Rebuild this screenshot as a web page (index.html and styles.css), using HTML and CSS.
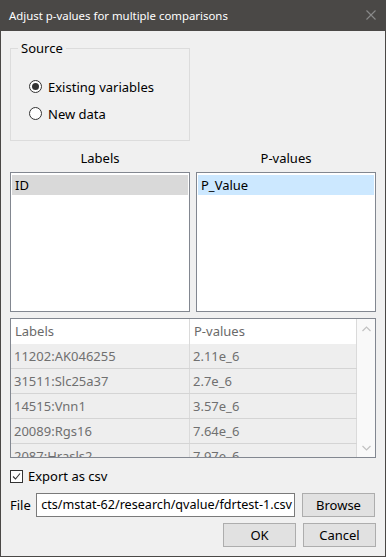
FILE: index.html
```html
<!DOCTYPE html>
<html>
<head>
<meta charset="utf-8">
<link rel="stylesheet" href="styles.css">
</head>
<body>
<div class="window">
  <div class="titlebar">
    <span class="title">Adjust p-values for multiple comparisons</span>
    <svg class="close" width="10" height="10" viewBox="0 0 10 10"><path d="M0.5 0.5 L9.5 9.5 M9.5 0.5 L0.5 9.5" stroke="#8a8a8a" stroke-width="1.1" fill="none"/></svg>
  </div>
  <div class="content">
    <div class="group">
      <span class="legend">Source</span>
      <div class="radio"><span class="rb checked"></span><span>Existing variables</span></div>
      <div class="radio"><span class="rb"></span><span>New data</span></div>
    </div>
    <div class="lists">
      <div class="listcol">
        <div class="listhead">Labels</div>
        <div class="listbox"><div class="item sel-gray">ID</div></div>
      </div>
      <div class="listcol">
        <div class="listhead">P-values</div>
        <div class="listbox"><div class="item sel-blue">P_Value</div></div>
      </div>
    </div>
    <div class="table">
      <div class="tbody">
        <div class="trow thead"><div class="c1">Labels</div><div class="c2">P-values</div></div>
        <div class="trow"><div class="c1">11202:AK046255</div><div class="c2">2.11e_6</div></div>
        <div class="trow"><div class="c1">31511:Slc25a37</div><div class="c2">2.7e_6</div></div>
        <div class="trow"><div class="c1">14515:Vnn1</div><div class="c2">3.57e_6</div></div>
        <div class="trow"><div class="c1">20089:Rgs16</div><div class="c2">7.64e_6</div></div>
        <div class="trow"><div class="c1">2087:Hrasls2</div><div class="c2">7.97e_6</div></div>
      </div>
      <div class="scrollbar">
        <svg width="9" height="6" viewBox="0 0 9 6"><path d="M0.5 5 L4.5 1 L8.5 5" stroke="#c2c2c2" stroke-width="1.2" fill="none"/></svg>
        <svg width="9" height="6" viewBox="0 0 9 6"><path d="M0.5 1 L4.5 5 L8.5 1" stroke="#c2c2c2" stroke-width="1.2" fill="none"/></svg>
      </div>
    </div>
    <div class="check">
      <span class="cb"><svg width="11" height="11" viewBox="0 0 11 11"><path d="M2 5.5 L4.5 8 L9 2.5" stroke="#333" stroke-width="1.1" fill="none"/></svg></span>
      <span>Export as csv</span>
    </div>
    <div class="filerow">
      <span class="filelabel">File</span>
      <div class="input"><span>cts/mstat-62/research/qvalue/fdrtest-1.csv</span></div>
      <div class="btn">Browse</div>
    </div>
    <div class="btnrow">
      <div class="btn">OK</div>
      <div class="btn">Cancel</div>
    </div>
  </div>
</div>
</body>
</html>
```
FILE: styles.css
```css
* { box-sizing: border-box; }
html, body { margin: 0; padding: 0; background: #f0f0f0; }
body { font-family: "Noto Sans", "Open Sans", sans-serif; font-size: 13px; color: #000; }
.window {
  width: 386px; height: 557px;
  border: 1px solid #4a4846; border-top: 0;
  background: #f0f0f0;
  display: flex; flex-direction: column;
}
.titlebar {
  height: 31px; background: #4a4846; margin: 0 -1px;
  display: flex; align-items: center; justify-content: space-between;
  padding: 0 10px 0 9px; flex: none;
}
.title { color: #fff; font-size: 11.4px; }
.close { margin-top: -1px; }
.content { padding: 17px 9px 0 9px; display: flex; flex-direction: column; }
.group {
  width: 180px; height: 93px;
  border: 1px solid #dcdcdc; padding: 24px 0 0 18px;
  position: relative; flex: none;
}
.legend {
  position: absolute; left: 7px; top: -9px; padding: 0 3px;
  background: #f0f0f0; line-height: 16px;
}
.radio { display: flex; align-items: center; height: 27px; }
.rb {
  width: 13px; height: 13px; border: 1px solid #333; border-radius: 50%;
  background: #fff; margin-right: 6px; position: relative; flex: none;
}
.rb.checked::after {
  content: ""; position: absolute; left: 2px; top: 2px; width: 7px; height: 7px;
  border-radius: 50%; background: #333;
}
.lists { display: flex; gap: 6px; }
.listcol { width: 180px; display: flex; flex-direction: column; }
.listhead { text-align: center; line-height: 16px; padding-top: 9px; height: 31px; }
.listbox {
  height: 140px; border: 1px solid #828790; background: #fff; padding: 1px;
}
.item { height: 20px; line-height: 20px; padding-left: 3px; margin-top: 1px; }
.sel-gray { background: #d9d9d9; }
.sel-blue { background: #cce8ff; }
.table {
  margin-top: 6px; height: 140px; border: 1px solid #828790; background: #fff;
  display: flex; overflow: hidden; flex: none;
}
.tbody { width: 346px; display: flex; flex-direction: column; }
.trow { display: flex; height: 25px; background: #eeeeee; border-bottom: 1px solid #d4d4d4; flex: none; color: #707070; }
.trow.thead { background: #fff; border-bottom: 0; color: #6a6a6a; }
.c1 { width: 179px; border-right: 1px solid #dadada; padding-left: 3px; line-height: 24px; white-space: nowrap; }
.c2 { flex: 1; padding-left: 3px; line-height: 24px; border-right: 1px solid #dadada; white-space: nowrap; }
.thead .c1, .thead .c2 { line-height: 25px; padding-left: 4px; }
.scrollbar {
  flex: 1; background: #f9f9f9; display: flex; flex-direction: column;
  justify-content: space-between; align-items: center; padding: 7px 0 6px;
}
.check { display: flex; align-items: center; margin-top: 11px; height: 14px; }
.cb {
  width: 13px; height: 13px; border: 1px solid #333; background: #fff; margin-right: 5px;
  display: flex; align-items: center; justify-content: center; flex: none;
}
.cb svg { display: block; }
.filerow { display: flex; align-items: center; margin-top: 10px; height: 24px; }
.filelabel { width: 26px; }
.input {
  width: 259px; height: 24px; border: 1px solid #7a7a7a; background: #fff;
  line-height: 22px; padding-right: 2px; white-space: nowrap; overflow: hidden;
  margin-right: 7px; display: flex; justify-content: flex-end; font-size: 12.6px;
}
.input span { flex: none; }
.btn {
  width: 73px; height: 24px; border: 1px solid #adadad; background: #e1e1e1;
  text-align: center; line-height: 22px; flex: none;
}
.btnrow { display: flex; justify-content: flex-end; gap: 7px; margin-top: 6px; }
```
